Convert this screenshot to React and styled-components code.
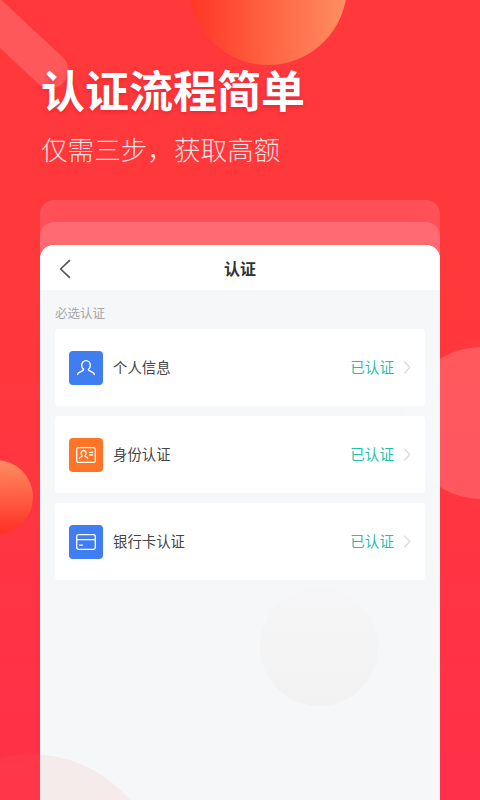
import styled, { createGlobalStyle } from "styled-components";

const GlobalStyle = createGlobalStyle`
  html, body {
    margin: 0;
    padding: 0;
  }
  body {
    font-family: "Noto Sans CJK SC", "Noto Sans", sans-serif;
  }
`;

const items = [
  { id: "info", title: "个人信息", tone: "blue", icon: <PersonIcon /> },
  { id: "idcard", title: "身份认证", tone: "orange", icon: <IdCardIcon /> },
  { id: "bank", title: "银行卡认证", tone: "blue", icon: <BankCardIcon /> },
];

function PersonIcon() {
  return (
    <svg width="20" height="20" viewBox="0 0 20 20" fill="none" stroke="#fff" strokeWidth="1.4" strokeLinecap="round" strokeLinejoin="round">
      <path d="M7.4 11.2C6.3 10.2 5.7 8.8 5.7 7.2C5.7 4.6 7.5 2.6 10 2.6C12.5 2.6 14.3 4.6 14.3 7.2C14.3 8.8 13.7 10.2 12.6 11.2C12.3 11.6 12.4 12.1 12.9 12.4L17.4 14.9C18 15.3 18.3 15.9 18.3 16.6" />
      <path d="M7.4 11.2C7.7 11.6 7.6 12.1 7.1 12.4L2.6 14.9C2 15.3 1.7 15.9 1.7 16.6" />
    </svg>
  );
}

function IdCardIcon() {
  return (
    <svg width="20" height="16" viewBox="0 0 20 16" fill="none" stroke="#fff" strokeWidth="1.3" strokeLinecap="round" strokeLinejoin="round">
      <rect x="0.7" y="0.7" width="18.6" height="14.6" rx="1.4" />
      <path d="M6.2 8.6C5.5 8 5.1 7.2 5.1 6.2C5.1 4.7 6.2 3.6 7.6 3.6C9 3.6 10.1 4.7 10.1 6.2C10.1 7.2 9.7 8 9 8.6C8.9 9 9 9.3 9.4 9.5L11.2 10.5C11.6 10.8 11.7 11.2 11.7 11.6M6.2 8.6C6.3 9 6.2 9.3 5.8 9.5L4 10.5C3.6 10.8 3.5 11.2 3.5 11.6" />
      <path d="M13.6 5.4H16.6M13.6 8H16.6" />
    </svg>
  );
}

function BankCardIcon() {
  return (
    <svg width="20" height="16" viewBox="0 0 20 16" fill="none" stroke="#fff" strokeWidth="1.3" strokeLinecap="round">
      <rect x="0.7" y="0.7" width="18.6" height="14.6" rx="1.8" />
      <path d="M0.7 5.6H19.3" />
      <path d="M3.6 11.2H6.4" />
    </svg>
  );
}

function BackIcon() {
  return (
    <svg width="14" height="20" viewBox="0 0 14 20" fill="none" stroke="#555" strokeWidth="1.7" strokeLinecap="round" strokeLinejoin="round">
      <path d="M11.4 1.6L2.6 10L11.4 18.4" />
    </svg>
  );
}

function ChevronIcon() {
  return (
    <svg width="8" height="13" viewBox="0 0 8 13" fill="none" stroke="#dcdcde" strokeWidth="1.3" strokeLinecap="round" strokeLinejoin="round">
      <path d="M1.6 1L6.8 6.5L1.6 12" />
    </svg>
  );
}

export default function App() {
  return (
    <>
      <GlobalStyle />
      <Page>
        <Stripe />
        <TopBall />
        <Hero>
          <Title>认证流程简单</Title>
          <Subtitle>仅需三步，获取高额</Subtitle>
        </Hero>
        <BackLayer>
          <MiddleLayer>
            <Panel>
              <Header>
                <BackButton>
                  <BackIcon />
                </BackButton>
                <HeaderTitle>认证</HeaderTitle>
              </Header>
              <Content>
                <SectionLabel>必选认证</SectionLabel>
                <List>
                  {items.map((item) => {
                    return (
                      <Row key={item.id}>
                        <IconTile $tone={item.tone}>{item.icon}</IconTile>
                        <RowTitle>{item.title}</RowTitle>
                        <Status>已认证</Status>
                        <ChevronIcon />
                      </Row>
                    );
                  })}
                </List>
              </Content>
              <GreyBall />
            </Panel>
          </MiddleLayer>
        </BackLayer>
        <RightBall />
        <LeftBall />
        <BottomArc />
      </Page>
    </>
  );
}

const Page = styled.div`
  position: relative;
  width: 480px;
  height: 800px;
  overflow: hidden;
  box-sizing: border-box;
  padding-top: 63px;
  background: linear-gradient(180deg, #ff383b 0%, #ff383c 40%, #ff3049 100%);
`;

const Stripe = styled.div`
  position: absolute;
  left: -75px;
  top: 10px;
  width: 160px;
  height: 36px;
  border-radius: 18px;
  background: rgba(255, 255, 255, 0.16);
  transform: rotate(43deg);
`;

const TopBall = styled.div`
  position: absolute;
  left: 189px;
  top: -93px;
  width: 158px;
  height: 158px;
  border-radius: 50%;
  background: linear-gradient(90deg, #ff3527 0%, #ff5a3c 40%, #ff8f62 100%);
`;

const Hero = styled.div`
  position: relative;
  padding-left: 41px;
`;

const Title = styled.h1`
  margin: 0;
  font-size: 44px;
  line-height: 52px;
  font-weight: 700;
  color: #fff;
  text-shadow: 0 2px 4px rgba(190, 10, 40, 0.35);
`;

const Subtitle = styled.p`
  margin: 16px 0 0;
  font-size: 26.6px;
  line-height: 36px;
  font-weight: 300;
  color: rgba(255, 255, 255, 0.85);
`;

const BackLayer = styled.div`
  margin: 33px 40px 0;
  padding-top: 22px;
  border-radius: 14px 14px 0 0;
  background: #ff5058;
`;

const MiddleLayer = styled.div`
  padding-top: 23px;
  border-radius: 14px 14px 0 0;
  background: #ff6a73;
`;

const Panel = styled.div`
  position: relative;
  height: 555px;
  border-radius: 14px 14px 0 0;
  overflow: hidden;
  background: #f6f7f9;
`;

const Header = styled.div`
  display: grid;
  grid-template-columns: 1fr auto 1fr;
  align-items: center;
  height: 45px;
  padding: 0 18px;
  background: #fff;
`;

const BackButton = styled.div`
  display: flex;
  padding-top: 2px;
`;

const HeaderTitle = styled.div`
  font-size: 16px;
  font-weight: 700;
  color: #333;
`;

const Content = styled.div`
  position: relative;
  z-index: 1;
  padding: 14px 15px 0;
`;

const SectionLabel = styled.div`
  font-size: 12.5px;
  line-height: 18px;
  color: #a6a6a8;
`;

const List = styled.div`
  display: flex;
  flex-direction: column;
  gap: 10px;
  margin-top: 7px;
`;

const Row = styled.div`
  display: flex;
  align-items: center;
  height: 77px;
  padding: 0 14px;
  border-radius: 4px;
  background: #fff;
`;

const IconTile = styled.div`
  display: flex;
  align-items: center;
  justify-content: center;
  width: 34px;
  height: 34px;
  border-radius: 4px;
  background: ${(props) => (props.$tone === "orange" ? "#ff7426" : "#3f7df0")};
`;

const RowTitle = styled.div`
  flex: 1;
  margin: 0 0 2px 10px;
  font-size: 14.4px;
  line-height: 20px;
  color: #444;
`;

const Status = styled.div`
  margin: 0 9px 2px 0;
  font-size: 14.6px;
  line-height: 20px;
  color: #1fc0ae;
`;

const GreyBall = styled.div`
  position: absolute;
  left: 220px;
  top: 343px;
  width: 118px;
  height: 118px;
  border-radius: 50%;
  background: linear-gradient(180deg, #f6f6f8 0%, #f2f2f2 100%);
`;

const RightBall = styled.div`
  position: absolute;
  left: 405px;
  top: 347px;
  width: 152px;
  height: 152px;
  border-radius: 50%;
  background: rgba(255, 255, 255, 0.17);
`;

const LeftBall = styled.div`
  position: absolute;
  left: -41px;
  top: 460px;
  width: 74px;
  height: 74px;
  border-radius: 50%;
  background: linear-gradient(180deg, #ff8d60 0%, #ff5a40 55%, #ff3024 100%);
`;

const BottomArc = styled.div`
  position: absolute;
  left: -102px;
  top: 754px;
  width: 264px;
  height: 264px;
  border-radius: 50%;
  background: rgba(255, 120, 95, 0.09);
`;
